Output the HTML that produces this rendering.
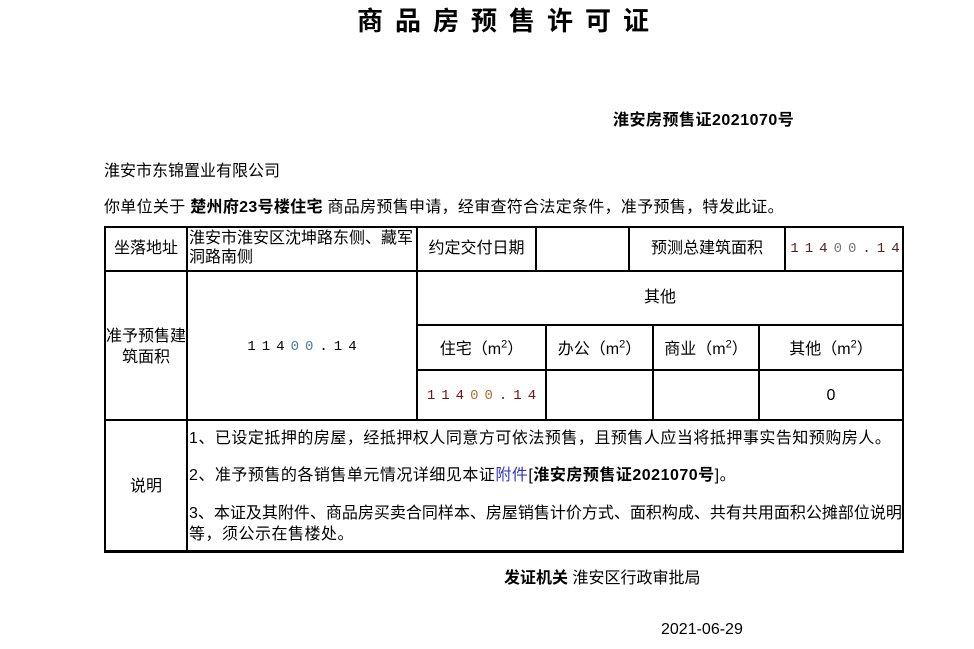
<!DOCTYPE html>
<html><head><meta charset="utf-8"><style>
body{margin:0;width:974px;height:649px;background:#fff;position:relative;overflow:hidden;font-family:"Liberation Sans","Noto Sans CJK SC",sans-serif;font-size:16px;color:#000}
.a{position:absolute;white-space:nowrap;line-height:20px}
.h{position:absolute;background:#000;height:2px}
.v{position:absolute;background:#000;width:2px}
.c{position:absolute;text-align:center;line-height:20px;white-space:nowrap}
.n{letter-spacing:6px;font-family:"Liberation Mono","Noto Sans CJK SC",monospace;font-size:14px}
sup{font-size:11px;line-height:0}
</style></head><body>
<div class="a" style="left:357px;top:6px;font-size:26px;font-weight:bold;letter-spacing:12px;line-height:30px">商品房预售许可证</div>
<div class="a" style="left:613px;top:111px;font-weight:bold;letter-spacing:0.5px">淮安房预售证2021070号</div>
<div class="a" style="left:104px;top:162px">淮安市东锦置业有限公司</div>
<div class="a" style="left:104px;top:198px;letter-spacing:0.3px">你单位关于 <b>楚州府23号楼住宅</b> 商品房预售申请，经审查符合法定条件，准予预售，特发此证。</div>

<div class="h" style="left:104px;top:226px;width:800px"></div>
<div class="h" style="left:104px;top:270px;width:800px"></div>
<div class="h" style="left:417px;top:324px;width:487px"></div>
<div class="h" style="left:417px;top:369px;width:487px"></div>
<div class="h" style="left:104px;top:419px;width:800px"></div>
<div class="h" style="left:104px;top:550px;width:800px;height:3px"></div>
<div class="v" style="left:104px;top:226px;height:327px"></div>
<div class="v" style="left:186px;top:226px;height:327px"></div>
<div class="v" style="left:416px;top:226px;height:194px"></div>
<div class="v" style="left:535px;top:226px;height:45px"></div>
<div class="v" style="left:628px;top:226px;height:45px"></div>
<div class="v" style="left:784px;top:226px;height:45px"></div>
<div class="v" style="left:902px;top:226px;height:327px"></div>
<div class="v" style="left:545px;top:324px;height:96px"></div>
<div class="v" style="left:652px;top:324px;height:96px"></div>
<div class="v" style="left:758px;top:324px;height:96px"></div>

<div class="c" style="left:106px;top:239px;width:80px">坐落地址</div>
<div class="a" style="left:189px;top:229px;line-height:19px">淮安市淮安区沈坤路东侧、藏军<br>洞路南侧</div>
<div class="c" style="left:418px;top:239px;width:117px">约定交付日期</div>
<div class="c" style="left:630px;top:239px;width:154px">预测总建筑面积</div>
<div class="c n" style="left:789px;top:239px;width:118px;color:#5a2020">114<span style="color:#777">00</span>.14</div>
<div class="c" style="left:418px;top:288px;width:484px">其他</div>
<div class="c" style="left:106px;top:326px;width:80px;line-height:21px">准予预售建<br>筑面积</div>
<div class="c n" style="left:191px;top:337px;width:228px">114<span style="color:#4a7ab0">00</span>.14</div>
<div class="c" style="left:418px;top:340px;width:127px">住宅（m<sup>2</sup>）</div>
<div class="c" style="left:547px;top:340px;width:105px">办公（m<sup>2</sup>）</div>
<div class="c" style="left:654px;top:340px;width:104px">商业（m<sup>2</sup>）</div>
<div class="c" style="left:760px;top:340px;width:142px">其他（m<sup>2</sup>）</div>
<div class="c n" style="left:421px;top:386px;width:127px;color:#7a1010">114<span style="color:#b07030">00</span>.14</div>
<div class="c" style="left:760px;top:386px;width:142px">0</div>
<div class="c" style="left:106px;top:477px;width:80px">说明</div>
<div class="a" style="left:189px;top:429px;letter-spacing:0.5px">1、已设定抵押的房屋，经抵押权人同意方可依法预售，且预售人应当将抵押事实告知预购房人。</div>
<div class="a" style="left:189px;top:466px;letter-spacing:0.5px">2、准予预售的各销售单元情况详细见本证<span style="color:#33c">附件</span>[<b>淮安房预售证2021070号</b>]。</div>
<div class="a" style="left:189px;top:504px;letter-spacing:0px">3、本证及其附件、商品房买卖合同样本、房屋销售计价方式、面积构成、共有共用面积公摊部位说明</div>
<div class="a" style="left:189px;top:525px;letter-spacing:0.5px">等，须公示在售楼处。</div>
<div class="a" style="left:504px;top:569px"><b>发证机关</b> 淮安区行政审批局</div>
<div class="a" style="left:661px;top:620px">2021-06-29</div>
</body></html>
